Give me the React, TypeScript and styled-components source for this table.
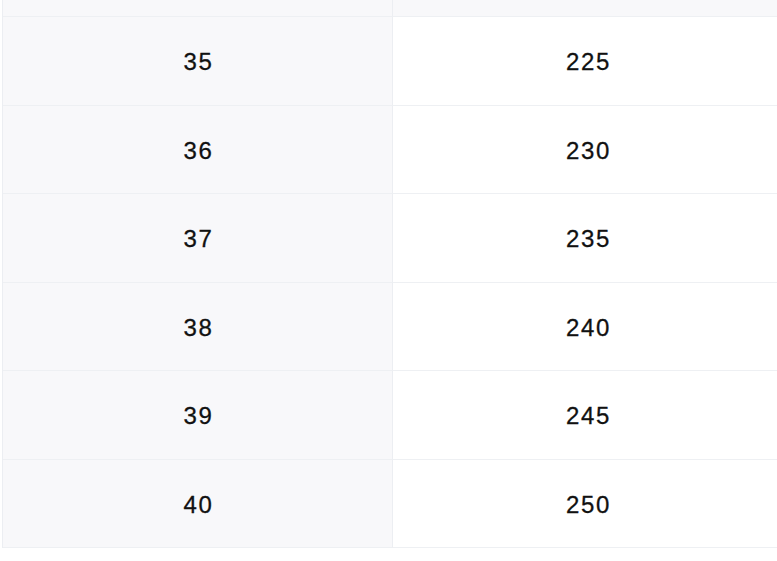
import React from "react";
import styled, { createGlobalStyle } from "styled-components";

const Global = createGlobalStyle`
  html, body { margin: 0; padding: 0; background: #ffffff; overflow: hidden; }
  body { font-family: "Liberation Sans", Arial, sans-serif; }
`;

const Page = styled.div`
  width: 777px;
  height: 561px;
  padding-left: 2px;
  box-sizing: border-box;
  overflow: hidden;
`;

const Table = styled.div`
  display: grid;
  grid-template-columns: 390px 389px;
  grid-auto-rows: 88.5px;
  grid-template-rows: 17px;
  border-left: 1px solid #eceef2;
  width: 780px;
`;

const Cell = styled.div<{ $side: "key" | "value"; $head?: boolean }>`
  display: flex;
  align-items: center;
  justify-content: center;
  box-sizing: border-box;
  padding-top: 3px;
  padding-left: 2px;
  border-bottom: 1px solid #eef0f3;
  border-right: ${(p) => (p.$side === "key" ? "1px solid #eceef2" : "none")};
  background: ${(p) => (p.$head || p.$side === "key" ? "#f8f8fa" : "#ffffff")};
  color: #111111;
  font-size: 24px;
  letter-spacing: 1.6px;
  -webkit-text-stroke: 0.3px #111111;
`;

const rows: [number, number][] = [
  [35, 225],
  [36, 230],
  [37, 235],
  [38, 240],
  [39, 245],
  [40, 250],
];

export default function App() {
  return (
    <Page>
      <Global />
      <Table>
        <Cell $side="key" $head />
        <Cell $side="value" $head />
        {rows.map(([k, v]) => (
          <React.Fragment key={k}>
            <Cell $side="key">{k}</Cell>
            <Cell $side="value">{v}</Cell>
          </React.Fragment>
        ))}
      </Table>
    </Page>
  );
}
